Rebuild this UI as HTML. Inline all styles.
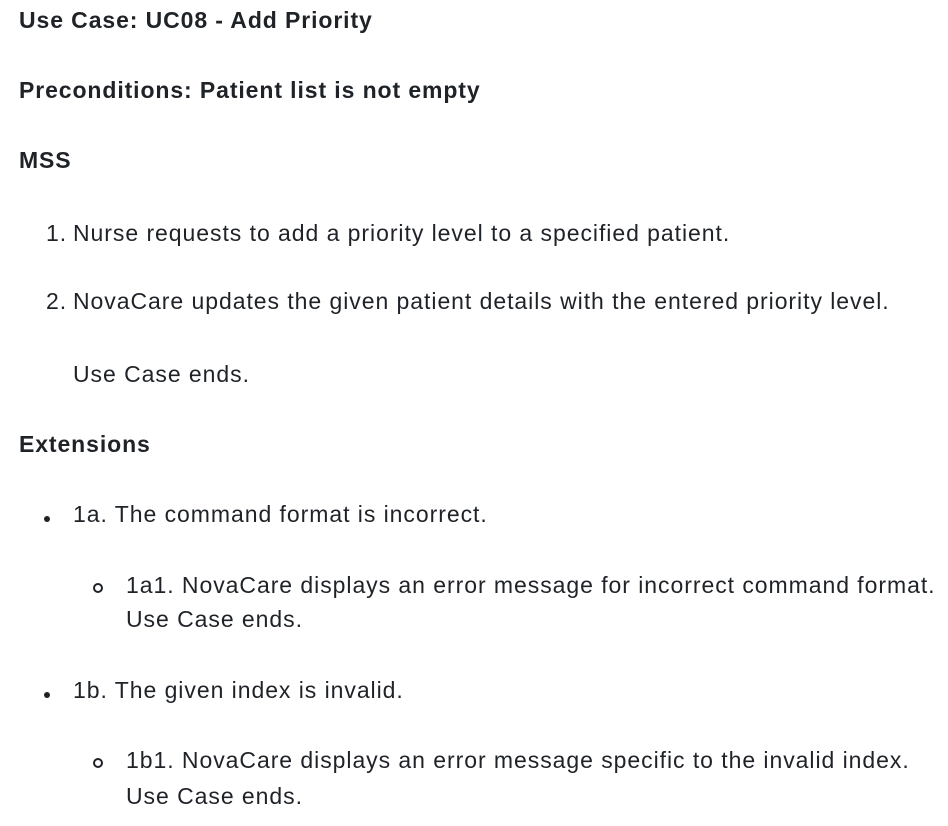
<!DOCTYPE html>
<html><head><meta charset="utf-8"><style>
body{margin:0;background:#fff;width:948px;height:826px;position:relative;overflow:hidden;font-family:"Liberation Sans",sans-serif;color:#1f2328;font-size:23px;letter-spacing:0.95px}
.l{position:absolute;white-space:nowrap;line-height:34px;height:34px}
.b{font-weight:bold;letter-spacing:0.9px}
.dot{position:absolute;width:6px;height:6px;border-radius:50%;background:#1f2328}
.circ{position:absolute;width:6px;height:6px;border-radius:50%;border:2px solid #1f2328}
</style></head><body>
<div class="l b" style="left:19px;top:3px">Use Case: UC08 - Add Priority</div>
<div class="l b" style="left:19px;top:73px">Preconditions: Patient list is not empty</div>
<div class="l b" style="left:19px;top:143px">MSS</div>
<div class="l" style="left:46px;top:216px">1.</div>
<div class="l" style="left:73px;top:216px">Nurse requests to add a priority level to a specified patient.</div>
<div class="l" style="left:46px;top:284px">2.</div>
<div class="l" style="left:73px;top:284px">NovaCare updates the given patient details with the entered priority level.</div>
<div class="l" style="left:73px;top:357px">Use Case ends.</div>
<div class="l b" style="left:19px;top:427px">Extensions</div>
<div class="dot" style="left:44px;top:516px"></div>
<div class="l" style="left:73px;top:497px">1a. The command format is incorrect.</div>
<div class="circ" style="left:93px;top:583px"></div>
<div class="l" style="left:126px;top:568px">1a1. NovaCare displays an error message for incorrect command format.</div>
<div class="l" style="left:126px;top:602px">Use Case ends.</div>
<div class="dot" style="left:44px;top:692px"></div>
<div class="l" style="left:73px;top:673px">1b. The given index is invalid.</div>
<div class="circ" style="left:93px;top:758px"></div>
<div class="l" style="left:126px;top:743px">1b1. NovaCare displays an error message specific to the invalid index.</div>
<div class="l" style="left:126px;top:779px">Use Case ends.</div>
</body></html>
